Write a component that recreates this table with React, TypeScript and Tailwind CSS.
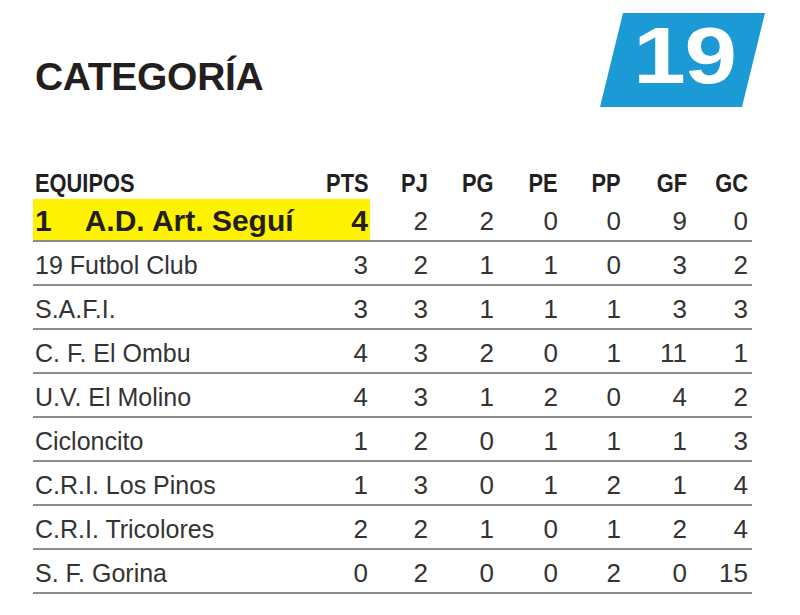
const rows = [
  { name: '19 Futbol Club', pts: 3, pj: 2, pg: 1, pe: 1, pp: 0, gf: 3, gc: 2 },
  { name: 'S.A.F.I.', pts: 3, pj: 3, pg: 1, pe: 1, pp: 1, gf: 3, gc: 3 },
  { name: 'C. F. El Ombu', pts: 4, pj: 3, pg: 2, pe: 0, pp: 1, gf: 11, gc: 1 },
  { name: 'U.V. El Molino', pts: 4, pj: 3, pg: 1, pe: 2, pp: 0, gf: 4, gc: 2 },
  { name: 'Cicloncito', pts: 1, pj: 2, pg: 0, pe: 1, pp: 1, gf: 1, gc: 3 },
  { name: 'C.R.I. Los Pinos', pts: 1, pj: 3, pg: 0, pe: 1, pp: 2, gf: 1, gc: 4 },
  { name: 'C.R.I. Tricolores', pts: 2, pj: 2, pg: 1, pe: 0, pp: 1, gf: 2, gc: 4 },
  { name: 'S. F. Gorina', pts: 0, pj: 2, pg: 0, pe: 0, pp: 2, gf: 0, gc: 15 },
]

// widths of the six stat columns, numbers are right aligned
const statCols = ['w-[58px]', 'w-[66px]', 'w-[64px]', 'w-[63px]', 'w-[66px]', 'w-[61px]']
const heads = ['PJ', 'PG', 'PE', 'PP', 'GF', 'GC']

// no condensed face installed, so the header labels get squeezed
function Cond({ children, right }: { children: React.ReactNode; right?: boolean }) {
  return (
    <span className={`inline-block scale-x-[0.84] ${right ? 'origin-right' : 'origin-left'}`}>{children}</span>
  )
}

function Stats({ values }: { values: (string | number)[] }) {
  return (
    <>
      {values.map((v, i) => (
        <div key={i} className={`${statCols[i]} text-right`}>
          {v}
        </div>
      ))}
    </>
  )
}

export default function App() {
  return (
    <div className="w-[800px] h-[615px] bg-white font-['Liberation_Sans',Arial,sans-serif] overflow-hidden">
      <div className="flex justify-between pl-[35px] pr-[35px]">
        <h1 className="mt-[57px] text-[39px] leading-none font-bold text-[#231f20] tracking-[-0.3px]">
          CATEGORÍA
        </h1>
        <div className="mt-[13px] w-[165px] h-[94px] bg-[#1c9ad6] [clip-path:polygon(23px_0,165px_0,142px_94px,0_94px)] flex items-center justify-center pb-[8px] pl-[4px]">
          <span className="inline-block scale-x-[1.18] text-white font-bold text-[80px] leading-none tracking-[-1px]">19</span>
        </div>
      </div>

      <div className="ml-[33px] w-[719px] mt-[63px]">
        <div className="flex h-[26px] mb-[3px] leading-none text-[26px] font-bold text-[#231f20]">
          <div className="w-[337px] flex justify-between pl-[2px] pr-[1px]">
            <Cond>EQUIPOS</Cond>
            <Cond right>PTS</Cond>
          </div>
          {heads.map((h, i) => (
            <div key={h} className={`${statCols[i]} text-right`}>
              <Cond right>{h}</Cond>
            </div>
          ))}
        </div>

        <div className="flex h-[43px] border-b-2 border-[#8c8c8c]">
          <div className="w-[337px] h-[41px] bg-[#fff200] flex items-center justify-between pl-[2px] pr-[2px] pt-[2px] text-[30px] font-bold leading-none text-[#231f20]">
            <span>
              1<span className="ml-[33px]">A.D. Art. Seguí</span>
            </span>
            <span>4</span>
          </div>
          <div className="flex items-center pt-[2px] text-[26px] leading-none text-[#333]">
            <Stats values={[2, 2, 0, 0, 9, 0]} />
          </div>
        </div>

        {rows.map((r) => (
          <div key={r.name} className="flex h-[44px] items-center pt-[4px] border-b-2 border-[#8c8c8c] text-[#333] leading-none text-[26px]">
            <div className="w-[337px] flex justify-between items-center pl-[2px] pr-[2px]">
              <span className="text-[25px]">{r.name}</span>
              <span>{r.pts}</span>
            </div>
            <Stats values={[r.pj, r.pg, r.pe, r.pp, r.gf, r.gc]} />
          </div>
        ))}
      </div>
    </div>
  )
}
